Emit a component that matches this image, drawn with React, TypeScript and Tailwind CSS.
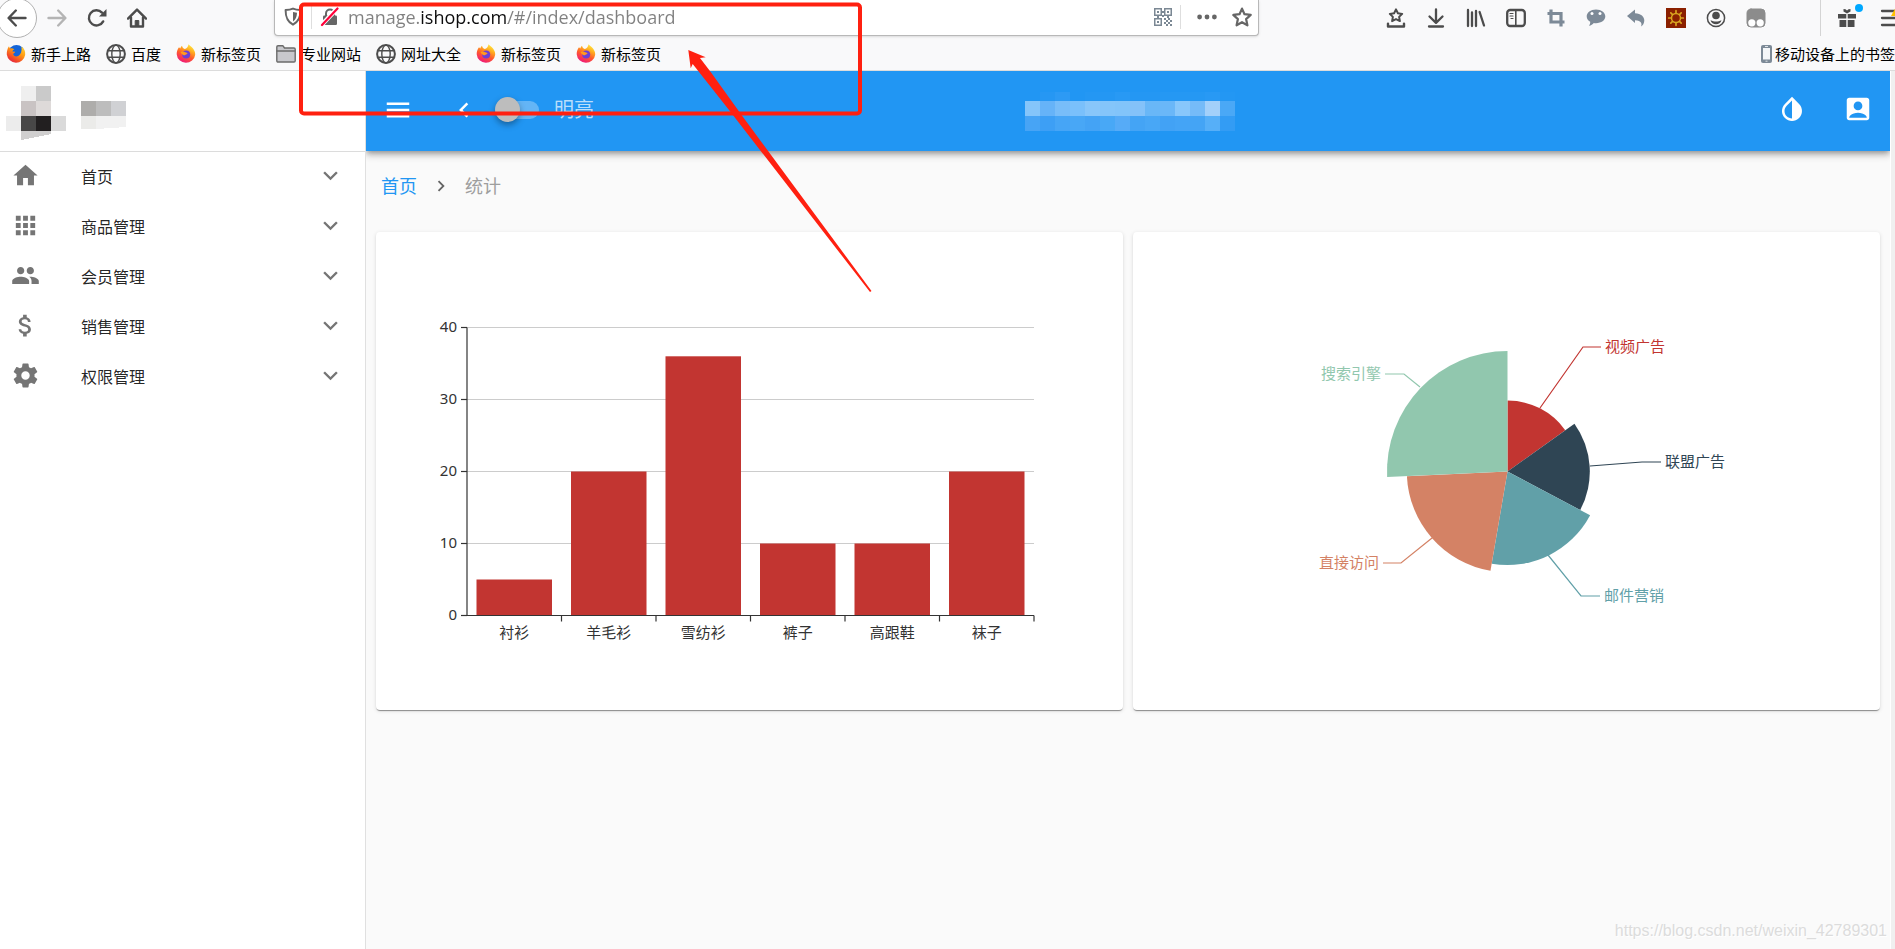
import { ReactNode } from 'react';
import {
  MdAccountBox,
  MdApps,
  MdAttachMoney,
  MdChevronLeft,
  MdChevronRight,
  MdExpandMore,
  MdHome,
  MdMenu,
  MdPeople,
} from 'react-icons/md';

/* ---------- browser icons ---------- */

interface IconProps {
  children: ReactNode;
  className?: string;
}

function Icon({ children, className = '' }: IconProps) {
  return (
    <svg
      viewBox="0 0 20 20"
      className={`size-5 shrink-0 ${className}`}
      fill="none"
      stroke="currentColor"
      strokeWidth="2"
      strokeLinecap="round"
      strokeLinejoin="round"
      aria-hidden="true"
    >
      {children}
    </svg>
  );
}

const BackIcon = () => (
  <Icon>
    <path d="M18.5 10H2M8.8 2.5L1.6 10l7.2 7.5" strokeWidth="2.4" />
  </Icon>
);

const ForwardIcon = () => (
  <Icon className="text-[#b4b4b4]">
    <path d="M1.5 10H18M11.2 2.5l7.2 7.5-7.2 7.5" strokeWidth="2.4" />
  </Icon>
);

const ReloadIcon = () => (
  <Icon>
    <path d="M16.2 13.4A7.6 7.6 0 1 1 15 4.6" strokeWidth="2.4" />
    <path d="M19.5 1v7.5H12z" fill="currentColor" stroke="none" />
  </Icon>
);

const HomeIcon = () => (
  <Icon>
    <path d="M1 10.6L10 1.6l9 9" strokeWidth="2.4" />
    <path d="M4 9.5v9h12v-9" strokeWidth="2.4" />
    <path d="M8.2 18v-5.5h3.6V18" fill="currentColor" strokeWidth="1" />
  </Icon>
);

const ShieldIcon = () => (
  <Icon className="text-[#666]">
    <path d="M10 1.6c2.4 1 4.6 1.3 7.4 1.3 0 6.6-1.2 11.4-7.4 14.8C3.8 14.3 2.6 9.5 2.6 2.9c2.8 0 5-.3 7.4-1.3z" />
    <path d="M10 5v9.500c2.600-1.800 3.800-4.500 4-8.800z" fill="currentColor" stroke="none" />
  </Icon>
);

const InsecureIcon = () => (
  <Icon className="text-[#666]">
    <path d="M6 9V6.5a4 4 0 0 1 8 0V9" />
    <rect x="3" y="8.5" width="14" height="9.5" rx="1.2" fill="currentColor" stroke="none" />
    <path d="M2 17.5L17.5 1.2" stroke="#fff" strokeWidth="4.5" strokeLinecap="butt" />
    <path d="M2 18L17.5 1.5" stroke="#ff0039" strokeWidth="2.2" />
  </Icon>
);

const QrIcon = () => (
  <svg viewBox="0 0 18 18" className="size-[18px] shrink-0 text-[#7b8894]" fill="currentColor" aria-hidden="true">
    <path fillRule="evenodd" d="M0 0h8v8H0zM1.5 1.5v5h5v-5zM10 0h8v8h-8zM11.5 1.5v5h5v-5zM0 10h8v8H0zM1.5 11.5v5h5v-5z" />
    <path d="M3 3h2v2H3zM13 3h2v2h-2zM3 13h2v2H3zM8 3h2v2H8zM8 7h2v2H8zM10 10h2v2h-2zM14 10h2v2h-2zM12 12h2v2h-2zM16 12h2v2h-2zM10 14h2v2h-2zM14 14h2v2h-2zM12 16h2v2h-2zM16 16h2v2h-2zM3 8h2v2H3zM13 8h2v2h-2z" />
  </svg>
);

const DotsIcon = () => (
  <Icon className="text-[#666]">
    <g fill="currentColor" stroke="none">
      <circle cx="2.6" cy="10" r="2.4" />
      <circle cx="10" cy="10" r="2.4" />
      <circle cx="17.4" cy="10" r="2.4" />
    </g>
  </Icon>
);

const StarIcon = () => (
  <Icon className="text-[#666]">
    <path d="M10 1.6l2.5 5.6 6.2.7-4.6 4.2 1.3 6.2-5.4-3.1-5.4 3.1 1.3-6.2L1.3 7.9l6.2-.7z" strokeWidth="2.2" />
  </Icon>
);

const FirefoxIcon = ({ classic = false }: { classic?: boolean }) => (
  <svg viewBox="0 0 20 20" className="size-5 shrink-0" aria-hidden="true">
    <defs>
      <linearGradient id="ffFlame" x1="0.8" y1="0" x2="0.3" y2="1">
        <stop offset="0" stopColor="#fff14a" />
        <stop offset="0.3" stopColor="#ffb01f" />
        <stop offset="0.6" stopColor="#ff5a2c" />
        <stop offset="1" stopColor="#ee1480" />
      </linearGradient>
      <linearGradient id="ffClassic" x1="0.9" y1="0" x2="0.2" y2="1">
        <stop offset="0" stopColor="#ffd83a" />
        <stop offset="0.4" stopColor="#ff9a12" />
        <stop offset="0.8" stopColor="#f0402c" />
        <stop offset="1" stopColor="#dd2050" />
      </linearGradient>
    </defs>
    {classic && <circle cx="10.5" cy="9" r="8" fill="#1565d8" />}
    <path
      d={
        classic
          ? 'M15.5 2.5c2.6 1.9 4 4.900 3.700 8.300A9.300 9.300 0 0 1 .8 10.600C.7 7.500 1.300 4.500 3 2.200c.2 1 .6 1.700 1.200 2.200 1.500-.3 2.900 0 4.100.8C7.200 5.700 6.600 6.500 6.400 7.500l2.800.3c-.3 1.200-1.600 1.300-2 2.200.3 2.200 3 3 5 1.900 2.800-1.500 3.800-4.600 3.300-9.400z'
          : 'M12.5.3c1.100 1.600 3.200 2.300 4.500 4.300 1.500 1.900 2.300 4 2.200 6.100A9.300 9.300 0 0 1 .7 10.300C.7 7.500 1.500 5.200 3 3.200l1.300 1.400C4.500 3.600 5 2.700 6 1.800c.2 1.600 1.200 2.600 2.800 3.200C10.500 4.500 12.300 3 12.500.3z'
      }
      fill={classic ? 'url(#ffClassic)' : 'url(#ffFlame)'}
    />
    {!classic && (
      <>
        <circle cx="10.2" cy="10.4" r="4" fill="#6b3fd6" />
        <path d="M4.5 8.2c1.7-1 3.5-.8 4.8.1 1 .7 2 .4 2.200 1.300-.7 1-2 .8-2.600 1.700-1.700 0-3.300-1.200-4.400-3.100z" fill="#ff9a1f" />
      </>
    )}
  </svg>
);

const GlobeIcon = () => (
  <Icon>
    <circle cx="10" cy="10" r="8.9" />
    <ellipse cx="10" cy="10" rx="4.2" ry="8.9" strokeWidth="1.4" />
    <path d="M2 6.8h16M2 13.2h16" strokeWidth="1.4" />
  </Icon>
);

const FolderIcon = () => (
  <Icon className="text-[#6b6b6b]">
    <path d="M.8 4.5V3c0-.7.5-1.2 1.2-1.2h5L8.5 4H18c.7 0 1.2.5 1.2 1.200v11.600c0 .7-.5 1.200-1.200 1.200H2c-.7 0-1.200-.5-1.200-1.200z" fill="#c8c8cc" strokeWidth="1.4" />
    <path d="M1 7h18" strokeWidth="1.4" />
  </Icon>
);

const toolbarIcons: { label: string; icon: ReactNode }[] = [
  {
    label: '收藏',
    icon: (
      <Icon>
        <path d="M10 1.4l1.9 3.900 4.300.6-3.100 3 .8 4.200L10 11.100l-3.900 2 .8-4.200-3.100-3 4.300-.6z" />
        <path d="M2 15.600v2.900h16v-2.900" strokeWidth="2.4" />
      </Icon>
    ),
  },
  {
    label: '下载',
    icon: (
      <Icon>
        <path d="M10 1.5v13M3.5 8.5l6.5 6.3 6.5-6.3M3 18.5h14" strokeWidth="2.3" />
      </Icon>
    ),
  },
  {
    label: '书库',
    icon: (
      <Icon>
        <path d="M2 2v16M6 4.500V18M10 3V18M13.600 4L18 17.500" strokeWidth="2.3" />
      </Icon>
    ),
  },
  {
    label: '侧栏',
    icon: (
      <Icon>
        <rect x="1.2" y="2" width="17.6" height="16" rx="3" strokeWidth="2.3" />
        <path d="M9.8 2.5v15" strokeWidth="1.6" />
        <path d="M4 5.5h3M4 8h3M5 10.5h2" strokeWidth="1.2" />
      </Icon>
    ),
  },
  {
    label: '截图',
    icon: (
      <Icon className="text-[#7d8a97]">
        <path d="M5 1.5V14h13.500M1.500 5.500H15v13" strokeWidth="3.2" strokeLinecap="butt" strokeLinejoin="miter" />
      </Icon>
    ),
  },
  {
    label: '消息',
    icon: (
      <Icon className="text-[#7d8a97]">
        <path d="M10 1.5c5.4 0 9.3 3 9.3 6.8 0 3.9-3.9 6.9-9.3 6.9-.8 0-1.5 0-2.2-.2-1.2 1.3-2.7 2.5-4.8 2.8.9-1.1 1.3-2.5 1.2-4C2 12.6.7 10.6.7 8.3c0-3.8 3.9-6.8 9.3-6.8z" fill="currentColor" stroke="none" />
        <circle cx="6" cy="5.5" r="1.5" fill="#fff" stroke="none" />
        <circle cx="14" cy="5.5" r="1.5" fill="#fff" stroke="none" />
      </Icon>
    ),
  },
  {
    label: '撤销',
    icon: (
      <Icon className="text-[#7d8a97]">
        <path d="M1 8l8-6.5v3.800c6 .3 9.500 3.500 9.300 7.500-.1 2.600-1.400 4.600-3.300 5.700 1.200-2.700.7-5.800-6-6.200v2.600z" fill="currentColor" stroke="none" />
      </Icon>
    ),
  },
  {
    label: '扩展',
    icon: (
      <Icon className="text-[#d9a520]">
        <rect width="20" height="20" fill="#8b2000" stroke="none" />
        <circle cx="10" cy="10" r="4.5" strokeWidth="1.5" />
        <path d="M10 2.7v2M10 15.3v2M2.7 10h2M15.3 10h2M4.8 4.8l1.500 1.500M13.700 13.700l1.500 1.500M4.800 15.200l1.500-1.500M13.700 6.300l1.500-1.500" strokeWidth="1.7" />
      </Icon>
    ),
  },
  {
    label: '账户',
    icon: (
      <Icon>
        <circle cx="10" cy="10" r="8.6" strokeWidth="1.5" />
        <circle cx="10" cy="7.5" r="3.8" fill="currentColor" stroke="none" />
        <path d="M4.5 12.3c2 .8 3.4 1.2 5.5 1.2s3.500-.4 5.500-1.200c-.7 2.500-2.900 4-5.500 4s-4.800-1.500-5.500-4z" fill="currentColor" stroke="none" />
      </Icon>
    ),
  },
  {
    label: '脚本',
    icon: (
      <Icon className="text-[#8c8c8c]">
        <rect x="1" y="1" width="18" height="18" rx="4" fill="currentColor" strokeWidth="1" />
        <circle cx="5.8" cy="14.8" r="3.6" fill="#fff" stroke="none" />
        <circle cx="14.2" cy="14.8" r="3.6" fill="#fff" stroke="none" />
      </Icon>
    ),
  },
];

const bookmarks: { label: string; icon: ReactNode }[] = [
  { label: '新手上路', icon: <FirefoxIcon classic /> },
  { label: '百度', icon: <GlobeIcon /> },
  { label: '新标签页', icon: <FirefoxIcon /> },
  { label: '专业网站', icon: <FolderIcon /> },
  { label: '网址大全', icon: <GlobeIcon /> },
  { label: '新标签页', icon: <FirefoxIcon /> },
  { label: '新标签页', icon: <FirefoxIcon /> },
];

function BrowserBar() {
  return (
    <header className="border-b border-[#dcdcdc] bg-[#f9f9fa] text-[#4c4c4c]">
      <div className="flex h-9 items-center">
        <div className="flex w-[274px] shrink-0 items-center">
          <button aria-label="后退" className="-ml-[3px] flex size-10 items-center justify-center rounded-full border border-[#b1b1b1] bg-white">
            <BackIcon />
          </button>
          <button aria-label="前进" className="flex w-10 justify-center"><ForwardIcon /></button>
          <button aria-label="刷新" className="flex w-10 justify-center"><ReloadIcon /></button>
          <button aria-label="主页" className="flex w-10 justify-center"><HomeIcon /></button>
        </div>

        <div className="flex h-9 min-w-0 flex-1 items-center rounded-b-sm border border-t-0 border-[#b8b8b8] bg-white pr-1.5 pb-px pl-2 shadow-sm">
          <ShieldIcon />
          <div className="mx-2 h-6 w-px shrink-0 bg-[#dedede]" />
          <InsecureIcon />
          {/* the host part of the address is darker than the rest */}
          <input
            type="text"
            aria-label="地址栏"
            defaultValue="manage.ishop.com/#/index/dashboard"
            className="ml-2 min-w-0 flex-1 bg-[linear-gradient(90deg,#808080_73px,#0c0c0d_73px,#0c0c0d_160px,#808080_160px)] bg-clip-text font-['Open_Sans',sans-serif] text-lg leading-6 text-transparent outline-none"
          />
          <QrIcon />
          <div className="mx-2 h-6 w-px shrink-0 bg-[#dedede]" />
          <button aria-label="页面操作" className="ml-2"><DotsIcon /></button>
          <button aria-label="加入书签" className="ml-[15px]"><StarIcon /></button>
        </div>

        <div className="flex w-[636px] shrink-0 items-center justify-between overflow-hidden pl-[117px]">
          <div className="flex">
            {toolbarIcons.map((item) => (
              <button key={item.label} aria-label={item.label} className="flex w-10 justify-center">
                {item.icon}
              </button>
            ))}
          </div>
          <div className="-mr-[5px] flex items-center">
            <div className="mr-4 h-9 w-px bg-[#d4d4d4]" />
            <button aria-label="礼物" className="relative">
              <Icon>
                <g fill="currentColor" stroke="none">
                  <path d="M1 6h8.3v4.5H1zM10.700 6H19v4.500h-8.300zM2.500 12h6.800v7H2.500zM10.700 12h6.800v7h-6.800z" />
                  <path d="M10 5.5L6.5 3.500V1l2 .2L10 2.500l1.500-1.300 2-.2v2.500z" />
                </g>
              </Icon>
              <span className="absolute -top-1 -right-1.5 size-2 rounded-full bg-[#00a8ff]" />
            </button>
            <button aria-label="菜单" className="relative ml-[23px]">
              <Icon>
                <path d="M2 3h16M2 10h16M2 17h16" strokeWidth="2.3" />
                <path d="M11 8l6-11 6 11z" fill="#ffbf00" stroke="none" />
              </Icon>
            </button>
          </div>
        </div>
      </div>

      <nav className="flex h-[34px] items-center justify-between overflow-hidden pt-0.5 pl-1.5 text-[15px] text-black">
        <div className="flex gap-[15px]">
          {bookmarks.map((item, i) => (
            <a key={i} href="#" className="flex items-center gap-[5px] whitespace-nowrap">
              <span className="text-[#4c4c4c]">{item.icon}</span>
              {item.label}
            </a>
          ))}
        </div>
        <a href="#" className="flex items-center gap-[3px] whitespace-nowrap">
          <svg viewBox="0 0 11 18" className="h-[18px] w-[11px]" aria-hidden="true">
            <rect width="11" height="18" rx="2" fill="#7d8a97" />
            <rect x="2" y="3" width="7" height="11.5" fill="#f4f6f8" />
            <path d="M4 1.5h3M4.5 16.2h2" stroke="#dfe4e8" strokeWidth="1" />
          </svg>
          移动设备上的书签
        </a>
      </nav>
    </header>
  );
}

/* ---------- sidebar ---------- */

const SettingsIcon = () => (
  <svg viewBox="0 0 24 24" className="size-[29px]" fill="currentColor" aria-hidden="true">
    <path d="M19.43 12.98c.04-.32.07-.64.07-.98s-.03-.66-.07-.98l2.11-1.65c.19-.15.24-.42.12-.64l-2-3.46c-.12-.22-.39-.3-.61-.22l-2.49 1c-.52-.4-1.08-.73-1.69-.98l-.38-2.65C14.46 2.18 14.25 2 14 2h-4c-.25 0-.46.18-.49.42l-.38 2.65c-.61.25-1.17.59-1.69.98l-2.49-1c-.23-.09-.49 0-.61.22l-2 3.46c-.13.22-.07.49.12.64l2.11 1.65c-.04.32-.07.65-.07.98s.03.66.07.98l-2.11 1.65c-.19.15-.24.42-.12.64l2 3.46c.12.22.39.3.61.22l2.49-1c.52.4 1.08.73 1.69.98l.38 2.65c.03.24.24.42.49.42h4c.25 0 .46-.18.49-.42l.38-2.65c.61-.25 1.17-.59 1.69-.98l2.49 1c.23.09.49 0 .61-.22l2-3.46c.12-.22.07-.49-.12-.64l-2.11-1.65zM12 15.5c-1.93 0-3.5-1.57-3.5-3.5s1.57-3.5 3.5-3.5 3.5 1.57 3.5 3.5-1.57 3.5-3.5 3.5z" />
  </svg>
);

const menuItems: { label: string; icon: ReactNode }[] = [
  { label: '首页', icon: <MdHome size={29} /> },
  { label: '商品管理', icon: <MdApps size={29} /> },
  { label: '会员管理', icon: <MdPeople size={29} /> },
  { label: '销售管理', icon: <MdAttachMoney size={29} /> },
  { label: '权限管理', icon: <SettingsIcon /> },
];

function Sidebar() {
  return (
    <aside className="z-20 w-[366px] shrink-0 border-r border-[#e0e0e0] bg-white">
      <div className="flex h-[81px] items-start gap-[15px] border-b border-[#dcdcdc] pt-[15px] pl-1.5">
        <svg viewBox="0 0 60 54" className="h-[54px] w-[60px]" shapeRendering="crispEdges" aria-hidden="true">
          <path d="M15 0h15v15H15z" fill="#efefef" />
          <path d="M30 0h15v15H30z" fill="#cacaca" />
          <path d="M15 15h15v15H15z" fill="#c9c3c3" />
          <path d="M30 15h15v15H30z" fill="#dedad9" />
          <path d="M0 30h15v15H0z" fill="#ececec" />
          <path d="M15 30h15v15H15z" fill="#484747" />
          <path d="M30 30h15v15H30z" fill="#221f20" />
          <path d="M45 30h15v15H45z" fill="#dadada" />
          <path d="M15 45h30v3l-30 6z" fill="#d0cfcf" />
        </svg>
        <svg viewBox="0 0 45 28" className="mt-[15px] h-7 w-[45px]" shapeRendering="crispEdges" aria-hidden="true">
          <path d="M0 0h15v15H0z" fill="#aeadab" />
          <path d="M15 0h15v15H15z" fill="#bdbdbd" />
          <path d="M30 0h15v15H30z" fill="#d0d1d4" />
          <path d="M0 15h15v13H0z" fill="#ebebe9" />
          <path d="M15 15h30v11l-30 2z" fill="#f1f1f1" />
        </svg>
      </div>
      <ul>
        {menuItems.map((item) => (
          <li key={item.label}>
            <button className="flex h-[50px] w-full items-center pr-5 pl-[11px] text-left text-base text-black/87">
              <span className="w-[70px] pb-1 text-[#757575]">{item.icon}</span>
              <span className="flex-1">{item.label}</span>
              <span className="pb-1 text-[#757575]"><MdExpandMore size={29} /></span>
            </button>
          </li>
        ))}
      </ul>
    </aside>
  );
}

/* ---------- top bar ---------- */

const titleTop = ['#2196f3', '#2697f3', '#2d9af4', '#2196f3', '#2497f3', '#2497f3', '#2899f4', '#2497f3', '#2497f3', '#2598f3', '#2598f3', '#2598f3', '#2899f4', '#2397f3'];
const titleMiddle = ['#85c5fa', '#66b3f8', '#78bdf9', '#7ac0fb', '#88c6fa', '#84c5fa', '#82c4fa', '#84c2f9', '#69b7f7', '#6ab7f8', '#88c7fb', '#75bbf8', '#a3d0fa', '#4aa8f6'];
const titleBottom = ['#47a4f5', '#3d9ff5', '#46a5f6', '#48a7f6', '#44a3f5', '#48a8f6', '#56abf7', '#44a4f5', '#48a7f6', '#42a2f5', '#44a4f6', '#44a4f5', '#56aff8', '#339cf4'];

function AppBar() {
  return (
    <div className="z-10 flex h-20 items-center bg-[#2196f3] px-[17px] text-white shadow-[0_2px_5px_-1px_rgba(0,0,0,0.3),0_5px_6px_rgba(0,0,0,0.14),0_1px_12px_rgba(0,0,0,0.12)]">
      <div className="flex flex-1 items-center pb-0.5">
        <button aria-label="菜单"><MdMenu size={30} /></button>
        <button aria-label="返回" className="ml-9"><MdChevronLeft size={30} /></button>
        <label className="ml-6 flex items-center gap-[15px] text-xl text-white/70">
          <input
            type="checkbox"
            role="switch"
            className="relative h-[18px] w-9 appearance-none rounded-full bg-[#64b5f6] before:absolute before:-top-1 before:-left-2 before:size-[25px] before:rounded-full before:bg-[#bdbdbd] before:shadow-[0_3px_6px_rgba(0,0,0,0.35)]"
          />
          明亮
        </label>
      </div>
      <svg viewBox="0 0 210 39" className="ml-1 h-[39px] w-[210px]" shapeRendering="crispEdges" aria-hidden="true">
        {titleTop.map((c, i) => <rect key={i} x={i * 15} y={0} width={15} height={9} fill={c} />)}
        {titleMiddle.map((c, i) => <rect key={i} x={i * 15} y={9} width={15} height={15} fill={c} />)}
        {titleBottom.map((c, i) => <rect key={i} x={i * 15} y={24} width={15} height={15} fill={c} />)}
      </svg>
      <div className="flex flex-1 items-center justify-end gap-9 pb-1">
        <button aria-label="主题">
          <svg viewBox="0 0 24 24" className="size-[30px]" fill="currentColor" aria-hidden="true">
            <path d="M12 19.58c-1.6 0-3.11-.63-4.24-1.75C6.62 16.69 6 15.19 6 13.58c0-1.58.62-3.11 1.76-4.24L12 5.1M17.66 7.93L12 2.27 6.34 7.93c-3.12 3.12-3.12 8.19 0 11.31C7.9 20.8 9.95 21.58 12 21.58s4.1-.78 5.66-2.34c3.12-3.12 3.12-8.19 0-11.31z" />
          </svg>
        </button>
        <button aria-label="账户"><MdAccountBox size={30} /></button>
      </div>
    </div>
  );
}

/* ---------- charts ---------- */

const sales = [
  { name: '衬衫', value: 5 },
  { name: '羊毛衫', value: 20 },
  { name: '雪纺衫', value: 36 },
  { name: '裤子', value: 10 },
  { name: '高跟鞋', value: 10 },
  { name: '袜子', value: 20 },
];

function BarChart() {
  const left = 91;
  const right = 658;
  const bottom = 383.5;
  const unit = 7.2;
  const step = (right - left) / sales.length;

  return (
    <svg viewBox="0 0 747 478" className="block w-full" role="img" aria-label="销量">
      {[0, 10, 20, 30, 40].map((v) => {
        const y = bottom - v * unit;
        return (
          <g key={v}>
            {v > 0 && <line x1={left} x2={right} y1={y} y2={y} stroke="#ccc" strokeWidth="1.2" />}
            <line x1={left - 6} x2={left} y1={y} y2={y} stroke="#333" strokeWidth="1.2" />
            <text x={left - 10} y={y + 4} textAnchor="end" fontSize="15" fill="#333">{v}</text>
          </g>
        );
      })}
      {sales.map((item, i) => (
        <g key={item.name}>
          <rect x={left + i * step + 9.5} y={bottom - item.value * unit} width={75.5} height={item.value * unit} fill="#c23531" />
          <line x1={left + (i + 1) * step} x2={left + (i + 1) * step} y1={bottom} y2={bottom + 6} stroke="#333" strokeWidth="1.2" />
          <text x={left + (i + 0.5) * step} y={bottom + 22} textAnchor="middle" fontSize="15" fill="#333">{item.name}</text>
        </g>
      ))}
      <line x1={left} x2={left} y1={bottom - 40 * unit} y2={bottom + 0.6} stroke="#333" strokeWidth="1.2" />
      <line x1={left} x2={right} y1={bottom} y2={bottom} stroke="#333" strokeWidth="1.2" />
    </svg>
  );
}

const sources = [
  { name: '视频广告', value: 235, radius: 71, color: '#c23531', line: '407,176 450,115 468,115', x: 472, y: 120, anchor: 'start' },
  { name: '联盟广告', value: 274, radius: 82.3, color: '#2f4554', line: '457,234 509,230 528,230', x: 532, y: 235, anchor: 'start' },
  { name: '邮件营销', value: 310, radius: 93.5, color: '#61a0a8', line: '415,323 448,364 467,364', x: 471, y: 369, anchor: 'start' },
  { name: '直接访问', value: 335, radius: 100.7, color: '#d48265', line: '299,306 268,331 250,331', x: 246, y: 336, anchor: 'end' },
  { name: '搜索引擎', value: 400, radius: 120.5, color: '#91c7ae', line: '287,155 271,142 252,142', x: 248, y: 147, anchor: 'end' },
] as const;

function RoseChart() {
  const cx = 374.5;
  const cy = 239.5;
  const total = sources.reduce((sum, s) => sum + s.value, 0);
  let angle = 0;

  return (
    <svg viewBox="0 0 747 478" className="block w-full" role="img" aria-label="访问来源">
      {sources.map((s) => {
        const start = angle;
        angle += (s.value / total) * Math.PI * 2;
        const x1 = cx + s.radius * Math.sin(start);
        const y1 = cy - s.radius * Math.cos(start);
        const x2 = cx + s.radius * Math.sin(angle);
        const y2 = cy - s.radius * Math.cos(angle);
        return (
          <g key={s.name}>
            <path d={`M${cx} ${cy}L${x1} ${y1}A${s.radius} ${s.radius} 0 0 1 ${x2} ${y2}z`} fill={s.color} />
            <polyline points={s.line} fill="none" stroke={s.color} strokeWidth="1.2" />
            <text x={s.x} y={s.y} textAnchor={s.anchor} fontSize="15" fill={s.color}>{s.name}</text>
          </g>
        );
      })}
    </svg>
  );
}

function Card({ children }: { children: ReactNode }) {
  return (
    <section className="rounded bg-white shadow-[0_2px_1px_-1px_rgba(0,0,0,0.3),0_1px_1px_rgba(0,0,0,0.14),0_1px_4px_rgba(0,0,0,0.12)]">
      {children}
    </section>
  );
}

/* red frame and arrow drawn over the page */
function Annotation() {
  return (
    <svg viewBox="0 0 580 300" className="pointer-events-none absolute top-0 left-[298px] z-30 h-[300px] w-[580px]" aria-hidden="true">
      <rect x="3" y="4.5" width="559" height="109" rx="3" fill="none" stroke="#ff2010" strokeWidth="4" />
      <path d="M390.3 50l17.4 7.3-5.7.7 10.7 14L445 117l128.5 174-1.5 1L432 111.300 394.700 64l-2 4.300z" fill="#ff2010" />
    </svg>
  );
}

export default function App() {
  return (
    <div className="relative flex min-h-screen flex-col overflow-hidden bg-[#fafafa] font-['Noto_Sans','Noto_Sans_CJK_SC',sans-serif]">
      <BrowserBar />
      <div className="flex flex-1">
        <Sidebar />
        <div className="flex min-w-0 flex-1 flex-col overflow-hidden">
          <AppBar />
          <main className="flex-1 px-2.5">
            <nav aria-label="breadcrumb" className="mb-[11px] flex h-[70px] items-center gap-[13px] pl-[5px] text-lg">
              <a href="#" className="text-[#2196f3]">首页</a>
              <MdChevronRight size={22} className="text-black/60" />
              <span className="text-[#9e9e9e]">统计</span>
            </nav>
            <div className="grid grid-cols-2 gap-2.5">
              <Card><BarChart /></Card>
              <Card><RoseChart /></Card>
            </div>
          </main>
        </div>
        <div className="w-[5px] shrink-0 border-l border-white bg-[#f0f0f0]" />
      </div>
      <Annotation />
      <p className="absolute right-2 bottom-1.5 z-30 font-['Liberation_Sans',Arial,sans-serif] text-base text-[#dcdcdc] [text-shadow:1px_1px_0_#fff]">
        https://blog.csdn.net/weixin_42789301
      </p>
    </div>
  );
}
